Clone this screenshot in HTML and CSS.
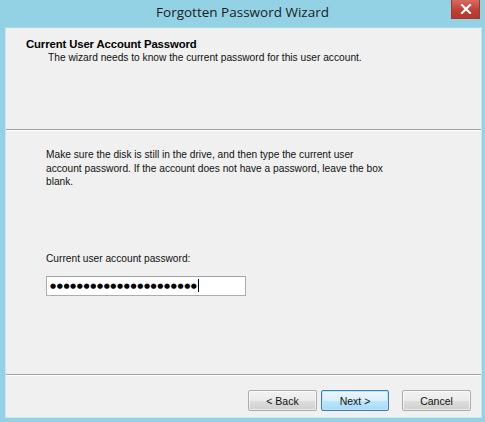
FILE: index.html
```html
<!DOCTYPE html>
<html>
<head>
<meta charset="utf-8">
<link rel="stylesheet" href="styles.css">
</head>
<body>
<div class="window">
  <div class="titlebar">
    <div class="title">Forgotten Password Wizard</div>
    <div class="close">
      <svg width="12" height="10" viewBox="0 0 12 10"><path d="M2 1 L10 9 M10 1 L2 9" stroke="#fff" stroke-width="2.2" stroke-linecap="square"/></svg>
    </div>
  </div>
  <div class="panel">
    <div class="header">
      <div class="h-title">Current User Account Password</div>
      <div class="h-sub">The wizard needs to know the current password for this user account.</div>
    </div>
    <div class="sep"></div>
    <div class="main">
      <p class="para">Make sure the disk is still in the drive, and then type the current user<br>account password. If the account does not have a password, leave the box<br>blank.</p>
      <div class="label">Current user account password:</div>
      <div class="input"><span class="dots">&#9679;&#9679;&#9679;&#9679;&#9679;&#9679;&#9679;&#9679;&#9679;&#9679;&#9679;&#9679;&#9679;&#9679;&#9679;&#9679;&#9679;&#9679;&#9679;&#9679;&#9679;&#9679;</span><span class="caret"></span></div>
    </div>
    <div class="sep"></div>
    <div class="footer">
      <div class="btn">&lt; Back</div>
      <div class="btn default">Next &gt;</div>
      <div class="btn cancel">Cancel</div>
    </div>
  </div>
</div>
</body>
</html>
```
FILE: styles.css
```css
html, body {
  margin: 0;
  padding: 0;
}
body {
  width: 485px;
  height: 422px;
  overflow: hidden;
  font-family: "Liberation Sans", Arial, sans-serif;
  font-size: 10.2px;
  color: #000;
}
.window {
  width: 485px;
  height: 422px;
  box-sizing: border-box;
  background: #92d2e4;
  padding: 0 3px 4px 5px;
  display: flex;
  flex-direction: column;
}
.titlebar {
  height: 27px;
  position: relative;
  display: flex;
  align-items: center;
  justify-content: center;
}
.title {
  font-family: "Open Sans", "Noto Sans", sans-serif;
  font-size: 13.5px;
  color: #1c1c1c;
  margin-top: -3px;
  margin-left: -2px;
}
.close {
  position: absolute;
  right: 2px;
  top: 0;
  width: 29px;
  height: 19px;
  background: linear-gradient(#d96a60, #c23c30 60%, #b8362c);
  border: 1px solid #9a3a33;
  border-top: none;
  box-sizing: border-box;
  display: flex;
  align-items: center;
  justify-content: center;
}
.panel {
  flex: 1;
  background: #f0f0f0;
  border: 1px solid #c9e6ef;
  border-top-color: #a9dbe9;
  display: flex;
  flex-direction: column;
}
.header {
  height: 101px;
  box-sizing: border-box;
  padding: 9px 0 0 20px;
}
.h-title {
  font-weight: bold;
  font-size: 11.3px;
  line-height: 14px;
  letter-spacing: -0.1px;
}
.h-sub {
  padding-left: 22px;
  line-height: 13px;
  color: #111;
}
.sep {
  height: 1px;
  background: #a0a0a0;
  border-bottom: 1px solid #ffffff;
}
.main {
  flex: 1;
  padding: 17px 0 0 40px;
}
.para {
  margin: 0;
  line-height: 13.5px;
  color: #111;
}
.label {
  margin-top: 63px;
  line-height: 13px;
  color: #111;
}
.input {
  margin-top: 11px;
  width: 200px;
  height: 20px;
  box-sizing: border-box;
  background: #fff;
  border: 1px solid #abadb3;
  border-top-color: #9ea2a8;
  display: flex;
  align-items: center;
  padding-left: 3px;
}
.dots {
  font-family: "DejaVu Sans", sans-serif;
  font-size: 7px;
  letter-spacing: 0.6px;
  line-height: 10px;
}
.caret {
  width: 1px;
  height: 13px;
  background: #000;
}
.footer {
  height: 41px;
  display: flex;
  align-items: flex-start;
  padding-top: 14px;
  box-sizing: border-box;
  padding-left: 242px;
}
.btn {
  width: 69px;
  height: 21px;
  box-sizing: border-box;
  border: 1px solid #acacac;
  border-radius: 2px;
  background: linear-gradient(#f2f2f2 0%, #ebebeb 50%, #dddddd 51%, #cfcfcf 100%);
  display: flex;
  align-items: center;
  justify-content: center;
  color: #111;
  font-size: 10.5px;
  box-shadow: inset 0 0 0 1px rgba(255,255,255,0.6);
}
.btn.default {
  margin-left: 4px;
  border-color: #3c7fb1;
  background: linear-gradient(#eaf6fd 0%, #d9f0fc 50%, #bee6fd 51%, #a7d9f5 100%);
  box-shadow: inset 0 0 0 1px #bfe3f7;
  width: 68px;
}
.btn.cancel {
  margin-left: 13px;
}
```
